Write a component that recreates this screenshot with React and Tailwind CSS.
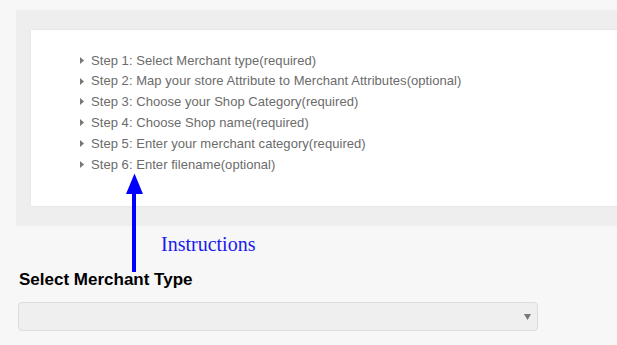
import React from "react";

const steps = [
  "Step 1: Select Merchant type(required)",
  "Step 2: Map your store Attribute to Merchant Attributes(optional)",
  "Step 3: Choose your Shop Category(required)",
  "Step 4: Choose Shop name(required)",
  "Step 5: Enter your merchant category(required)",
  "Step 6: Enter filename(optional)",
];

export default function App() {
  return (
    <div className="relative h-[345px] w-[617px] overflow-hidden bg-[#f7f7f7] font-['Liberation_Sans',Arial,sans-serif]">
      <div className="ml-[16px] mt-[10px] w-[700px] bg-[#eeeeee] pb-[20px] pl-[15px] pt-[20px]">
        <div className="h-[176px] bg-white pl-[48px] pt-[20px] shadow-[0_0_2px_rgba(0,0,0,0.08)]">
          <ul className="flex flex-col">
            {steps.map((s) => (
              <li key={s} className="flex h-[20.8px] items-center text-[13px] text-[#6b6b6b]">
                <svg width="4" height="7" viewBox="0 0 4 7" className="mr-[7px] ml-[1px]">
                  <path d="M0 0 L4 3.5 L0 7 Z" fill="#777" />
                </svg>
                <span className="tracking-[0.05px]">{s}</span>
              </li>
            ))}
          </ul>
        </div>
      </div>

      <div className="ml-[161px] mt-[5px] h-[26px] font-['Liberation_Serif','Times_New_Roman',serif] text-[20px] leading-[26px] text-[#1a1aee]">
        Instructions
      </div>

      <div className="ml-[19px] mt-[12px] text-[17px] font-bold leading-[22px] text-black">
        Select Merchant Type
      </div>

      <div className="ml-[18px] mt-[11px] flex h-[29px] w-[520px] items-center justify-end rounded-[4px] border border-[#dcdcdc] bg-[#efefef] pr-[6px]">
        <svg width="7" height="6" viewBox="0 0 7 6">
          <path d="M0 0 L7 0 L3.5 6 Z" fill="#777" />
        </svg>
      </div>

      <svg className="absolute left-0 top-0" width="617" height="345" viewBox="0 0 617 345">
        <rect x="132" y="190" width="4" height="82" fill="#0000ff" />
        <path d="M126 194 L134.5 173.5 L143 194 Z" fill="#0000ff" />
      </svg>
    </div>
  );
}
